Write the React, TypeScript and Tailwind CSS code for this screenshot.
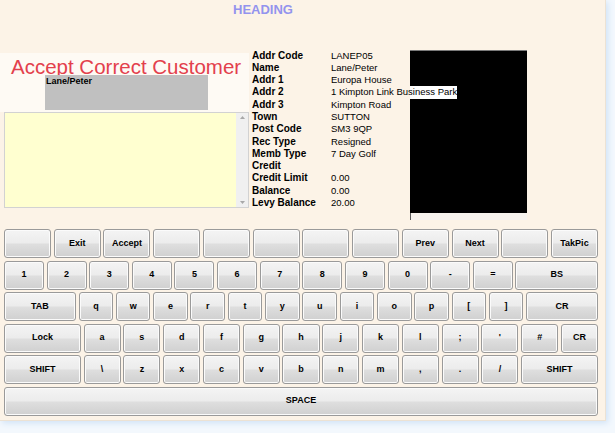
import React from "react";

type K = { l: string; s?: string };

const Key = ({ l, s }: K) => (
  <div
    className={`${s ?? ""} min-w-0 flex items-center justify-center rounded-[3px] border border-[#9a9a9a] bg-[linear-gradient(to_bottom,#f4f4f4_0%,#ececec_47%,#dedede_53%,#d0d0d0_100%)] shadow-[inset_0_0_0_1px_#fbfbfb] text-[9px] font-bold text-black whitespace-nowrap`}
  >
    {l}
  </div>
);

const row1: K[] = [
  { l: "" }, { l: "Exit" }, { l: "Accept" }, { l: "" }, { l: "" }, { l: "" },
  { l: "" }, { l: "" }, { l: "Prev" }, { l: "Next" }, { l: "" }, { l: "TakPic" },
];
const row2: K[] = [
  ..."1234567890-=".split("").map((c) => ({ l: c })),
  { l: "BS", s: "col-span-2" },
];
const row3: K[] = [
  { l: "TAB", s: "col-span-2" },
  ..."qwertyuiop[]".split("").map((c) => ({ l: c })),
  { l: "CR", s: "col-span-2" },
];
const row4: K[] = [
  { l: "Lock", s: "col-span-2" },
  ..."asdfghjkl;'#".split("").map((c) => ({ l: c })),
  { l: "CR" },
];
const row5: K[] = [
  { l: "SHIFT", s: "col-span-2" },
  ..."\\zxcvbnm,./".split("").map((c) => ({ l: c })),
  { l: "SHIFT", s: "col-span-2" },
];

const info: [string, string][] = [
  ["Addr Code", "LANEP05"],
  ["Name", "Lane/Peter"],
  ["Addr 1", "Europa House"],
  ["Addr 2", "1 Kimpton Link Business Park"],
  ["Addr 3", "Kimpton Road"],
  ["Town", "SUTTON"],
  ["Post Code", "SM3 9QP"],
  ["Rec Type", "Resigned"],
  ["Memb Type", "7 Day Golf"],
  ["Credit", ""],
  ["Credit Limit", "0.00"],
  ["Balance", "0.00"],
  ["Levy Balance", "20.00"],
];

export default function App() {
  return (
    <div className="flex items-start w-[615px] h-[433px] bg-[#f3f8fd] overflow-hidden font-['Liberation_Sans',Arial,sans-serif] text-black">
      <div className="shrink-0 w-[606px] h-[421px] bg-[#fcf3e7] flex flex-col overflow-hidden border-r border-b border-[#ece2d4] shadow-[2px_2px_6px_#d0e2f6]">
        <div className="h-[17px] pt-[2px] pl-[233px] text-[13px] leading-[15px] font-bold text-[#9393ee]">
          HEADING
        </div>
        <div className="mt-[32px] h-[177px] flex">
          <div className="w-[249px] flex flex-col pt-[4px]">
            <div className="h-[59px] bg-[#fefaf4] flex flex-col">
              <div className="pt-[6px] pl-[11px] text-[20.5px] leading-[16px] text-[#e3404c] whitespace-nowrap">
                Accept Correct Customer
              </div>
              <div className="ml-[45px] w-[163px] h-[35px] bg-[#c0c0c0] pl-[1px] pt-[1px] text-[9px] leading-[10px] font-bold">
                Lane/Peter
              </div>
            </div>
            <div className="ml-[4px] w-[245px] h-[96px] border border-[#d2d2d2] bg-[#ffffd0] flex justify-end">
              <div className="w-[12px] h-full bg-[#f0f0f0] flex flex-col justify-between items-center py-[3px]">
                <svg width="5" height="3" viewBox="0 0 5 3">
                  <path d="M0 3 L2.5 0 L5 3 Z" fill="#a8a8a8" />
                </svg>
                <svg width="5" height="3" viewBox="0 0 5 3">
                  <path d="M0 0 L2.5 3 L5 0 Z" fill="#a8a8a8" />
                </svg>
              </div>
            </div>
          </div>
          <div className="w-[161px] pl-[3px] pt-[0.5px] flex flex-col">
            {info.map(([k, v]) => (
              <div key={k} className="flex h-[12.3px] leading-[12.3px]">
                <span className="w-[79px] shrink-0 text-[10px] font-bold whitespace-nowrap">{k}</span>
                {k === "Addr 2" ? (
                  <span className="relative z-10 shrink-0 text-[9.5px] whitespace-nowrap bg-[linear-gradient(to_right,transparent_79px,#ffffff_79px)]">
                    {v}
                  </span>
                ) : (
                  <span className="text-[9.5px] whitespace-nowrap">{v}</span>
                )}
              </div>
            ))}
          </div>
          <div className="w-[118px] pt-[1px] flex flex-col">
            <div className="w-[117px] h-[163px] bg-black border-t border-[#7a7a7a]" />
            <div className="w-[117px] h-[7px] border-l border-[#5a5a5a] bg-[#f7f3ee]" />
          </div>
        </div>
        <div className="w-[594px] ml-[4px] pt-[3px] flex flex-col gap-[2.5px]">
          <div className="w-[594px] grid grid-cols-12 gap-x-[2.7px] h-[29px]">
            {row1.map((k, i) => <Key key={i} {...k} />)}
          </div>
          <div className="w-[594px] grid grid-cols-14 gap-x-[2.7px] h-[29px]">
            {row2.map((k, i) => <Key key={i} {...k} />)}
          </div>
          <div className="w-[594px] grid grid-cols-16 gap-x-[2.7px] h-[29px]">
            {row3.map((k, i) => <Key key={i} {...k} />)}
          </div>
          <div className="w-[594px] grid grid-cols-15 gap-x-[2.7px] h-[29px]">
            {row4.map((k, i) => <Key key={i} {...k} />)}
          </div>
          <div className="w-[594px] grid grid-cols-15 gap-x-[2.7px] h-[29px]">
            {row5.map((k, i) => <Key key={i} {...k} />)}
          </div>
          <div className="w-[594px] flex h-[29px]">
            <Key l="SPACE" s="flex-1" />
          </div>
        </div>
      </div>
    </div>
  );
}
